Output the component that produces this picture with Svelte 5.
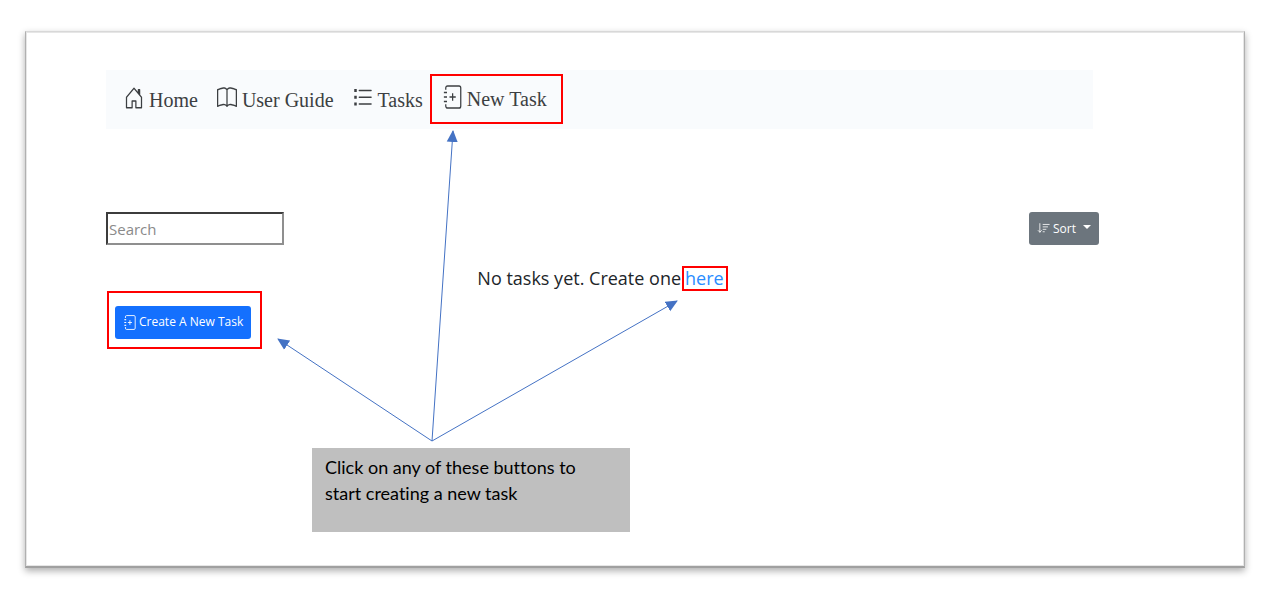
<script>
  let query = $state('');
</script>

{#snippet journal(cls)}
  <svg class={cls} viewBox="0 0 16 16" preserveAspectRatio="none" aria-hidden="true">
    <path d="M3 3.200V2a1.400 1.400 0 0 1 1.400-1.400h9.200A1.400 1.400 0 0 1 15 2v12a1.400 1.400 0 0 1-1.400 1.400H4.400A1.400 1.400 0 0 1 3 14v-1.200M1.500 5h2.500M1.500 8h2.500M1.500 11h2.500M3 4.500v1M3 7.500v1M3 10.500v1M8.500 5.500v5M6 8h5" fill="none" stroke="currentColor" />
  </svg>
{/snippet}

<main class="frame">
  <nav class="navbar" aria-label="Main">
    <a href="#home">
      <svg class="icon" viewBox="0 0 16 16" preserveAspectRatio="none" aria-hidden="true">
        <path d="M8.354 1.146a.5.5 0 0 0-.708 0l-6 6A.5.5 0 0 0 1.500 7.500v7a.5.5 0 0 0 .5.5h4.500a.5.5 0 0 0 .5-.5v-4h2v4a.5.5 0 0 0 .5.5H14a.5.5 0 0 0 .5-.5v-7a.5.5 0 0 0-.146-.354L13 5.793V2.500a.5.5 0 0 0-.5-.5h-1a.5.5 0 0 0-.5.5v1.293L8.354 1.146zM2.500 14V7.707l5.500-5.500 5.500 5.500V14H10v-4a.5.5 0 0 0-.5-.5h-3a.5.5 0 0 0-.5.5v4H2.500z" fill="currentColor" />
      </svg>
      Home
    </a>
    <a href="#guide">
      <svg class="icon" viewBox="0 0 16 16" preserveAspectRatio="none" aria-hidden="true">
        <path d="M1 2.828c.885-.37 2.154-.769 3.388-.893 1.330-.134 2.458.063 3.112.752v9.746c-.935-.53-2.120-.603-3.213-.493-1.180.12-2.370.461-3.287.811V2.828zm7.500-.141c.654-.689 1.782-.886 3.112-.752 1.234.124 2.503.523 3.388.893v9.923c-.918-.35-2.107-.692-3.287-.81-1.094-.111-2.278-.039-3.213.492V2.687zM8 1.783C7.015.936 5.587.81 4.287.94c-1.514.153-3.042.672-3.994 1.105A.5.5 0 0 0 0 2.500v11a.5.5 0 0 0 .707.455c.882-.4 2.303-.881 3.680-1.020 1.409-.142 2.590.087 3.223.877a.5.5 0 0 0 .78 0c.633-.79 1.814-1.019 3.222-.877 1.378.139 2.800.62 3.681 1.020A.5.5 0 0 0 16 13.500v-11a.5.5 0 0 0-.293-.455c-.952-.433-2.480-.952-3.994-1.105C10.413.809 8.985.936 8 1.783z" fill="currentColor" />
      </svg>
      User Guide
    </a>
    <a href="#tasks">
      <svg class="icon" viewBox="0 0 16 16" preserveAspectRatio="none" aria-hidden="true">
        <path d="M5 3h9.500M5 7.500h9.500M5 12h9.500" stroke="currentColor" stroke-linecap="round" />
        <path d="M1 2h2v2H1zM1 6.500h2v2H1zM1 11h2v2H1z" fill="currentColor" />
      </svg>
      Tasks
    </a>
    <a class="marked" href="#new">
      {@render journal('icon')}
      New Task
    </a>
  </nav>

  <div class="toolbar">
    <input type="text" placeholder="Search" aria-label="Search" bind:value={query} />
    <button class="sort" type="button">
      <svg class="small-icon" viewBox="0 0 16 16" aria-hidden="true">
        <path d="M3.500 2v10.500M1.500 10.500l2 2 2-2M7.500 3h7.500M7.500 6h5.500M7.500 9h3.500M7.500 12h1.500" fill="none" stroke="currentColor" stroke-linecap="round" stroke-linejoin="round" />
      </svg>
      Sort
      <span class="caret"></span>
    </button>
  </div>

  <p class="empty">No tasks yet. Create one<a class="marked" href="#new">here</a></p>

  <div class="create-area marked">
    <button class="create" type="button">
      {@render journal('small-icon')}
      Create A New Task
    </button>
  </div>

  <p class="callout">Click on any of these buttons to start creating a new task</p>

  <svg class="arrows" width="610" height="400" viewBox="0 0 610 400" aria-hidden="true">
    <defs>
      <marker id="head" markerUnits="userSpaceOnUse" markerWidth="12" markerHeight="12" refX="11" refY="6" orient="auto">
        <path d="M0 0.500L12 6L0 11.500z" fill="#4472c4" />
      </marker>
    </defs>
    <g fill="none" stroke="#4472c4">
      <path d="M357 360L203 258" marker-end="url(#head)" />
      <path d="M357 360L378 50" marker-end="url(#head)" />
      <path d="M357 360L602 220" marker-end="url(#head)" />
    </g>
  </svg>
</main>

<style>
  :global(body) {
    background: #fff;
  }

  * {
    box-sizing: border-box;
  }

  .frame {
    position: relative;
    margin: 31px 24px 35px 25px;
    padding: 38px 145px 34px 80px;
    border: 1px solid #b0b0b0;
    border-top-color: #d8d8d8;
    border-bottom: 2px solid #a0a0a0;
    box-shadow: 0 3px 7px rgb(0 0 0 / 32%), inset 0 0 0 1px #e6e6e6;
    background: #fff;
    font-family: "Open Sans", "Noto Sans", sans-serif;
    color: #212529;
  }

  a {
    text-decoration: none;
  }

  .marked {
    border: 2px solid #f00;
  }

  .navbar {
    display: flex;
    align-items: center;
    height: 59px;
    margin-right: 6px;
    padding-left: 18px;
    background: #f9fbfd;
    font: 20px/24px "Liberation Serif", serif;
  }

  .navbar a {
    display: flex;
    align-items: center;
    gap: 5px;
    margin-right: 19px;
    color: #3c3f42;
  }

  .navbar a.marked {
    height: 50px;
    margin: 0 0 2px -12px;
    padding: 0 14px 0 10px;
  }

  .icon {
    width: 20px;
    height: 24px;
    margin-bottom: 3px;
  }

  .toolbar {
    display: flex;
    justify-content: space-between;
    margin-top: 83px;
  }

  input {
    width: 178px;
    height: 33px;
    padding: 0 1px;
    border: 2px solid;
    border-color: #3c3c3c #8f8f8f #8f8f8f #3c3c3c;
    border-radius: 0;
    font: 15px/22px "Open Sans", sans-serif;
  }

  input::placeholder {
    color: #8a8a8a;
    opacity: 1;
  }

  button {
    display: flex;
    align-items: center;
    gap: 3px;
    height: 33px;
    padding: 0 8px;
    border: 0;
    border-radius: 3px;
    color: #fff;
    font: 12px/18px "Open Sans", sans-serif;
    white-space: nowrap;
  }

  .small-icon {
    width: 13px;
    height: 15px;
  }

  .sort {
    background: #6c757d;
  }

  .caret {
    margin: 0 0 3px 4px;
    border: 4px solid transparent;
    border-top-color: currentColor;
    border-bottom: 0;
  }

  .create {
    background: #1470fe;
  }

  .empty {
    display: flex;
    justify-content: center;
    align-items: center;
    gap: 1px;
    height: 25px;
    margin: 21px 0 0;
    font-size: 18px;
    line-height: 21px;
  }

  .empty a {
    padding: 0 2px 0 1px;
    color: #2a8cff;
  }

  .create-area {
    display: flex;
    align-items: center;
    width: fit-content;
    height: 58px;
    margin-left: 1px;
    padding: 4px 9px 0 6px;
  }

  .callout {
    width: 318px;
    height: 84px;
    margin: 99px 0 0 206px;
    padding: 6px 36px 0 13px;
    background: #bfbfbf;
    color: #000;
    font: 18px/26px Lato, sans-serif;
    font-variant-ligatures: none;
  }

  .arrows {
    position: absolute;
    top: 49px;
    left: 49px;
    pointer-events: none;
  }
</style>
